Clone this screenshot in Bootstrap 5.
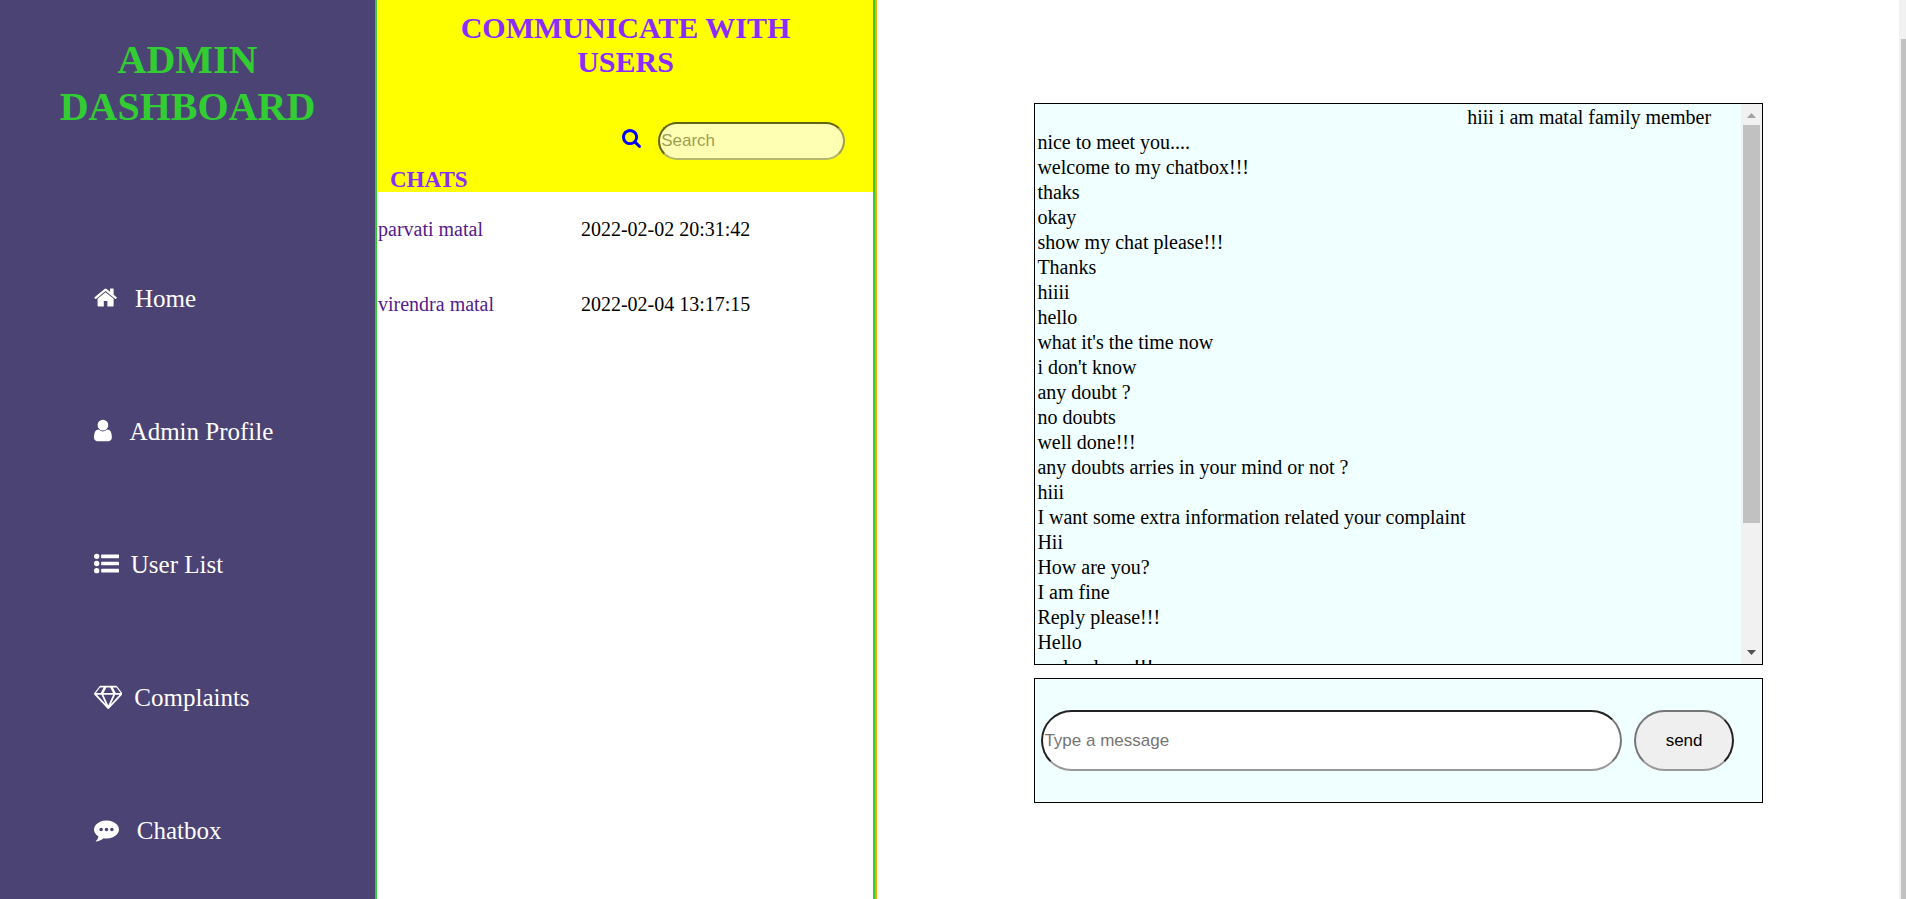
<!DOCTYPE html>
<html lang="en">
<head>
<meta charset="utf-8">
<meta name="viewport" content="width=device-width, initial-scale=1">
<title>Admin Dashboard - Chatbox</title>
<link rel="stylesheet" href="https://cdn.jsdelivr.net/npm/bootstrap@5.3.0/dist/css/bootstrap.min.css">
<style>
  body { font: 20px/25px "Liberation Serif", "Times New Roman", serif; color: #000; background: #fff; }
  .shell { display: grid; grid-template-columns: 377fr 500fr 1022fr 7px; height: 100vh; }
  .sidebar { background: #4c4375; border-right: 2px solid limegreen; }
  .sidebar h1 { font-size: 40px; line-height: 47px; color: limegreen; padding: 36px 48px 0; height: 232px; }
  .menu a { color: #fff; font-size: 25px; line-height: 29px; height: 133px; margin-left: 25%; padding-top: 52px; text-decoration: none; }
  .menu svg { height: 25px; margin-top: 1px; fill: currentColor; }
  .gap-wide { gap: 18px; }
  .gap-tight { gap: 12px; }
  .people { border-right: 2px solid orange; }
  .people-in { border-right: 2px solid limegreen; padding-left: 1px; }
  .people-head { background: yellow; color: #8a2bff; height: 192px; }
  .people-head h2 { font-size: 30px; line-height: 34px; padding: 11px 72px 0; height: 122px; }
  .people-head h3 { font-size: 23px; line-height: 25px; padding-left: 12px; margin-top: 7px; }
  .finder { gap: 17px; padding-right: 28px; }
  .finder svg { height: 19px; fill: blue; margin-bottom: 6px; }
  .field { font: 17px/20px "Liberation Sans", Arial, sans-serif; background: #fff; border: 2px solid; border-color: #222 #767676 #999 #222; padding: 0 1px; min-width: 0; outline: 0; }
  .field::placeholder { color: #757575; opacity: 1; }
  .finder .field { width: 40%; height: 38px; border-radius: 19px; opacity: .7; }
  .threads { width: 100%; }
  .threads td { height: 75px; padding: 0; width: 59%; }
  .threads td:first-child { width: 41%; }
  .threads a { color: #551a8b; text-decoration: none; }
  .conversation { padding: 103px 13.3% 0 15.4%; }
  .log { background: azure; border: 1px solid #000; height: 562px; overflow: hidden; }
  .log ul { padding: 1px 30px 0 2px; }
  .track { width: 21px; background: #f1f1f1; padding: 9px 2px; }
  .track svg { width: 9px; height: 5px; }
  .thumb { background: #c1c1c1; height: 398px; margin-top: 7px; }
  .composer { background: azure; border: 1px solid #000; height: 125px; margin-top: 13px; padding: 0 28px 0 6px; gap: 12px; }
  .composer .field { height: 61px; border-radius: 31px; }
  .composer button { font: 17px/20px "Liberation Sans", Arial, sans-serif; width: 100px; height: 61px; border-radius: 31px; border: 2px solid; border-color: #767676 #222 #999 #767676; background: #efefef; color: #000; padding: 0; }
  .page-track { background: #f1f1f1; padding: 39px 0 0 2px; }
  .page-track div { background: #c1c1c1; }
</style>
</head>
<body>
<div class="shell overflow-hidden">
  <aside class="sidebar overflow-hidden">
    <h1 class="fw-bold text-center mb-0">ADMIN DASHBOARD</h1>
    <nav class="menu d-flex flex-column" aria-label="Main">
      <a href="#" class="d-flex align-items-start gap-wide"><svg viewBox="64 0 1664 1792" aria-hidden="true"><path d="M1472 992v480q0 26-19 45t-45 19h-384v-384h-256v384h-384q-26 0-45-19t-19-45v-480q0-1 .5-3t.5-3l575-474 575 474q1 2 1 6zm223-69l-62 74q-8 9-21 11h-3q-13 0-21-7l-692-577-692 577q-12 8-24 7-13-2-21-11l-62-74q-8-10-7-23.500t11-21.500l719-599q32-26 76-26t76 26l244 204v-195q0-14 9-23t23-9h192q14 0 23 9t9 23v408l219 182q10 8 11 21.500t-7 23.500z"/></svg><span>Home</span></a>
      <a href="#" class="d-flex align-items-start gap-wide"><svg viewBox="256 0 1280 1792" aria-hidden="true"><path d="M1536 1399q0 109-62.500 187t-150.500 78h-854q-88 0-150.500-78t-62.500-187q0-85 8.500-160.500t31.500-152 58.500-131 94-89 134.500-34.500q131 128 313 128t313-128q76 0 134.500 34.500t94 89 58.500 131 31.500 152 8.500 160.500zm-256-887q0 159-112.500 271.500t-271.500 112.500-271.500-112.500-112.500-271.500 112.500-271.500 271.500-112.500 271.500 112.500 112.500 271.500z"/></svg><span>Admin Profile</span></a>
      <a href="#" class="d-flex align-items-start gap-tight"><svg viewBox="0 0 1792 1792" aria-hidden="true"><circle cx="192" cy="384" r="192"/><circle cx="192" cy="896" r="192"/><circle cx="192" cy="1408" r="192"/><rect x="512" y="256" width="1280" height="256" rx="32"/><rect x="512" y="768" width="1280" height="256" rx="32"/><rect x="512" y="1280" width="1280" height="256" rx="32"/></svg><span>User List</span></a>
      <a href="#" class="d-flex align-items-start gap-tight"><svg viewBox="0 0 2048 1792" aria-hidden="true"><path d="M212 768l623 665-300-665h-323zm812 772l349-772h-698zm-538-900l204-384h-262l-288 384h346zm727 793l623-665h-323zm-530-793h682l-204-384h-274zm879 0h346l-288-384h-262zm89-486l384 512q14 18 13 41.500t-17 40.500l-960 1024q-18 20-47 20t-47-20l-960-1024q-16-17-17-40.500t13-41.500l384-512q18-26 51-26h1152q33 0 51 26z" fill-rule="evenodd"/></svg><span>Complaints</span></a>
      <a href="#" class="d-flex align-items-start gap-wide"><svg viewBox="0 0 1792 1792" aria-hidden="true"><path d="M640 896a128 128 0 1 0-256 0a128 128 0 1 0 256 0zm384 0a128 128 0 1 0-256 0a128 128 0 1 0 256 0zm384 0a128 128 0 1 0-256 0a128 128 0 1 0 256 0zm384 0q0 174-120 321.500t-326 233-450 85.500q-110 0-211-18-173 173-435 229-52 10-86 13-12 1-22-6t-13-18q-4-15 20-37 5-5 23.500-21.500t25.500-23.500 23.500-25.500 24-31.500 20.500-37 20-48 14.500-57.500 12.500-72.500q-146-90-229.500-216.500t-83.500-269.500q0-174 120-321.500t326-233 450-85.500 450 85.500 326 233 120 321.500z" fill-rule="evenodd"/></svg><span>Chatbox</span></a>
    </nav>
  </aside>

  <section class="people d-flex">
    <div class="people-in w-100">
      <header class="people-head">
        <h2 class="fw-bold text-center mb-0">COMMUNICATE WITH USERS</h2>
        <form class="finder d-flex justify-content-end align-items-center">
          <label for="search" aria-label="Search"><svg viewBox="64 128 1664 1664" aria-hidden="true"><path d="M1216 832q0-185-131.500-316.500t-316.500-131.500-316.500 131.500-131.500 316.500 131.500 316.500 316.500 131.500 316.500-131.500 131.500-316.500zm512 832q0 52-38 90t-90 38q-54 0-90-38l-343-342q-179 124-399 124-143 0-273.500-55.500t-225-150-150-225-55.500-273.500 55.500-273.500 150-225 225-150 273.500-55.500 273.500 55.500 225 150 150 225 55.500 273.500q0 220-124 399l343 343q37 37 37 90z"/></svg></label>
          <input class="field" id="search" type="text" placeholder="Search">
        </form>
        <h3 class="fw-bold mb-0">CHATS</h3>
      </header>
      <table class="threads">
        <tbody>
          <tr><td><a href="#">parvati matal</a></td><td>2022-02-02 20:31:42</td></tr>
          <tr><td><a href="#">virendra matal</a></td><td>2022-02-04 13:17:15</td></tr>
        </tbody>
      </table>
    </div>
  </section>

  <main class="conversation">
    <div class="log d-flex">
      <ul class="list-unstyled mb-0 flex-grow-1">
        <li class="text-end">hiii i am matal family member</li>
        <li>nice to meet you....</li>
        <li>welcome to my chatbox!!!</li>
        <li>thaks</li>
        <li>okay</li>
        <li>show my chat please!!!</li>
        <li>Thanks</li>
        <li>hiiii</li>
        <li>hello</li>
        <li>what it's the time now</li>
        <li>i don't know</li>
        <li>any doubt ?</li>
        <li>no doubts</li>
        <li>well done!!!</li>
        <li>any doubts arries in your mind or not ?</li>
        <li>hiii</li>
        <li>I want some extra information related your complaint</li>
        <li>Hii</li>
        <li>How are you?</li>
        <li>I am fine</li>
        <li>Reply please!!!</li>
        <li>Hello</li>
        <li>reply please!!!</li>
      </ul>
      <div class="track d-flex flex-column flex-shrink-0 align-items-center" aria-hidden="true">
        <svg viewBox="0 0 9 5"><path d="M0 5L4.500 0L9 5z" fill="#a3a3a3"/></svg>
        <div class="thumb w-100"></div>
        <svg class="mt-auto" viewBox="0 0 9 5"><path d="M0 0L4.500 5L9 0z" fill="#505050"/></svg>
      </div>
    </div>
    <form class="composer d-flex align-items-center">
      <input class="field flex-grow-1" type="text" placeholder="Type a message" aria-label="Type a message">
      <button type="button">send</button>
    </form>
  </main>

  <div class="page-track" aria-hidden="true"><div class="h-100"></div></div>
</div>
<script src="https://cdn.jsdelivr.net/npm/bootstrap@5.3.0/dist/js/bootstrap.bundle.min.js"></script>
</body>
</html>
